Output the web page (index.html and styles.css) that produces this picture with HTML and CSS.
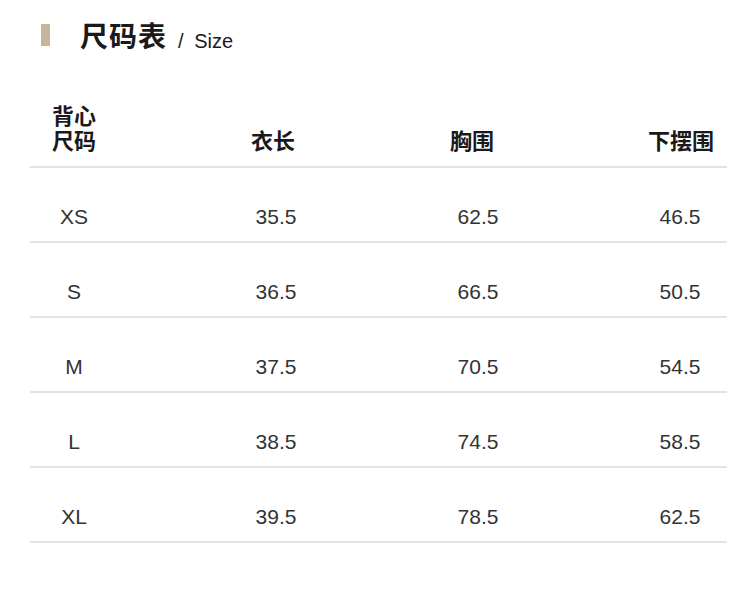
FILE: index.html
```html
<!DOCTYPE html>
<html lang="zh-CN">
<head>
<meta charset="utf-8">
<title>尺码表</title>
<link rel="stylesheet" href="styles.css">
</head>
<body>
<div class="page">
  <div class="title">
    <span class="bar"></span>
    <span class="title-cn">尺码表</span>
    <span class="title-en">/ Size</span>
  </div>
  <div class="table">
    <div class="row head">
      <div class="cell c1">背心<br>尺码</div>
      <div class="cell">衣长</div>
      <div class="cell">胸围</div>
      <div class="cell">下摆围</div>
    </div>
    <div class="row"><div class="cell">XS</div><div class="cell">35.5</div><div class="cell">62.5</div><div class="cell">46.5</div></div>
    <div class="row"><div class="cell">S</div><div class="cell">36.5</div><div class="cell">66.5</div><div class="cell">50.5</div></div>
    <div class="row"><div class="cell">M</div><div class="cell">37.5</div><div class="cell">70.5</div><div class="cell">54.5</div></div>
    <div class="row"><div class="cell">L</div><div class="cell">38.5</div><div class="cell">74.5</div><div class="cell">58.5</div></div>
    <div class="row"><div class="cell">XL</div><div class="cell">39.5</div><div class="cell">78.5</div><div class="cell">62.5</div></div>
  </div>
</div>
</body>
</html>
```

FILE: styles.css
```css
html, body {
  margin: 0;
  padding: 0;
  background: #ffffff;
}

.page {
  width: 750px;
  height: 589px;
  font-family: "Liberation Sans", "Noto Sans CJK SC", sans-serif;
  color: #222;
}

.title {
  display: flex;
  align-items: baseline;
  padding: 17px 0 0 41px;
  height: 36px;
}

.bar {
  display: inline-block;
  width: 9px;
  height: 22px;
  background: #c5b59d;
  align-self: center;
  margin-right: 30px;
}

.title-cn {
  font-family: "Noto Sans CJK SC", sans-serif;
  font-size: 28px;
  font-weight: 700;
  line-height: 36px;
  color: #1a1a1a;
  letter-spacing: 1px;
}

.title-en {
  font-size: 20px;
  margin-left: 11px;
  word-spacing: 5px;
  color: #1a1a1a;
  position: relative;
  top: 1px;
}

.table {
  margin: 49px 0 0 30px;
  width: 697px;
}

.row {
  display: grid;
  grid-template-columns: repeat(4, 88px);
  column-gap: 114px;
  box-sizing: border-box;
  height: 75px;
  border-bottom: 2px solid #e3e3e3;
  padding-top: 37px;
}

.cell {
  text-align: center;
  font-size: 21px;
  line-height: 24px;
  color: #333;
}

.row.head {
  height: 66px;
  padding-top: 0;
  padding-bottom: 14px;
  align-items: end;
}

.head .cell {
  font-family: "Noto Sans CJK SC", sans-serif;
  font-size: 22px;
  font-weight: 700;
  line-height: 25px;
  color: #1a1a1a;
}

.head .cell:nth-child(2) { margin-left: -6px; }
.head .cell:nth-child(3) { margin-left: -12px; }
.head .cell:nth-child(4) { margin-left: 2px; }
```
